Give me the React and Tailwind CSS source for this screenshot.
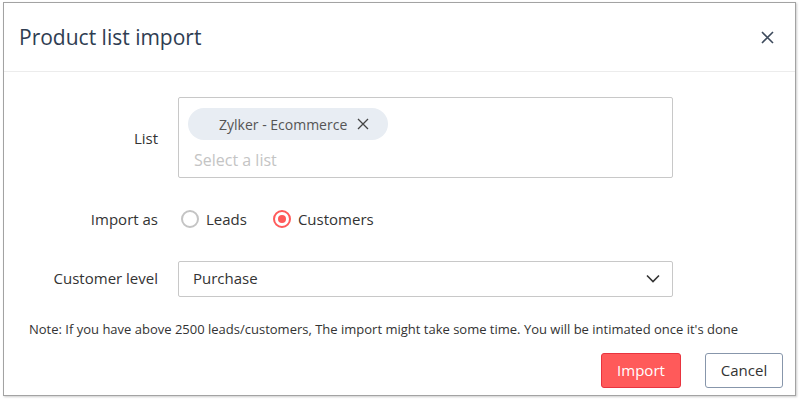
import React, { useState } from 'react'

const font = { fontFamily: '"Open Sans", "Noto Sans", sans-serif' }

const App = () => {
  const [importAs, setImportAs] = useState('customers')

  return (
    <div className="w-[800px] h-[400px] bg-white pt-[2px] pl-[3px]" style={font}>
      <div className="w-[793px] h-[394px] border border-[#a3a3a3] shadow-[1px_1px_2px_rgba(0,0,0,0.2)] bg-white flex flex-col">
        {/* header */}
        <div className="h-[69px] flex items-center justify-between pl-[15px] pr-[21px] border-b border-[#ececec]">
          <h2 className="text-[21px] text-[#2f3d52] leading-none">Product list import</h2>
          <button className="text-[#3d4a5c]">
            <svg width="13" height="13" viewBox="0 0 13 13" fill="none" stroke="currentColor" strokeWidth="1.6">
              <path d="M1 1L12 12M12 1L1 12" />
            </svg>
          </button>
        </div>

        {/* body */}
        <div className="flex flex-col pt-[25px]">
          <div className="flex items-start">
            <label className="w-[154px] pt-[30px] text-right text-[15px] text-[#333]">List</label>
            <div className="ml-[20px] w-[495px] h-[81px] border border-[#c8c8c8] rounded-[2px] px-[9px] pt-[10px]">
              <span className="inline-flex items-center h-[32px] rounded-full bg-[#e8edf3] pl-[31px] pr-[19px] text-[14px] text-[#555]">
                Zylker - Ecommerce
                <svg className="ml-[10px]" width="12" height="12" viewBox="0 0 12 12" fill="none" stroke="#444" strokeWidth="1.3">
                  <path d="M1 1L11 11M11 1L1 11" />
                </svg>
              </span>
              <div className="mt-[12px] pl-[6px] text-[16px] text-[#c4c4c4] leading-none">Select a list</div>
            </div>
          </div>

          <div className="flex items-center mt-[30px]">
            <label className="w-[154px] text-right text-[15px] text-[#333]">Import as</label>
            <div className="ml-[23px] flex items-center">
              <button onClick={() => setImportAs('leads')} className="flex items-center">
                <span className={`w-[18px] h-[18px] rounded-full border-2 flex items-center justify-center ${importAs === 'leads' ? 'border-[#ff5a5a]' : 'border-[#c4c4c4]'}`}>
                  {importAs === 'leads' && <span className="w-[8px] h-[8px] rounded-full bg-[#ff5a5a]" />}
                </span>
                <span className="ml-[7px] text-[15px] text-[#333]">Leads</span>
              </button>
              <button onClick={() => setImportAs('customers')} className="flex items-center ml-[26px]">
                <span className={`w-[18px] h-[18px] rounded-full border-2 flex items-center justify-center ${importAs === 'customers' ? 'border-[#ff5a5a]' : 'border-[#c4c4c4]'}`}>
                  {importAs === 'customers' && <span className="w-[8px] h-[8px] rounded-full bg-[#ff5a5a]" />}
                </span>
                <span className="ml-[7px] text-[15px] text-[#333]">Customers</span>
              </button>
            </div>
          </div>

          <div className="flex items-center mt-[30px]">
            <label className="w-[154px] text-right text-[15px] text-[#333]">Customer level</label>
            <div className="ml-[20px] w-[495px] h-[36px] border border-[#c8c8c8] rounded-[2px] flex items-center justify-between pl-[14px] pr-[12px]">
              <span className="text-[15px] text-[#333]">Purchase</span>
              <svg width="14" height="9" viewBox="0 0 14 9" fill="none" stroke="#333" strokeWidth="1.6">
                <path d="M1 1.5L7 7.5L13 1.5" />
              </svg>
            </div>
          </div>

          <p className="mt-[23px] pl-[25px] text-[13px] text-[#333]">
            Note: If you have above 2500 leads/customers, The import might take some time. You will be intimated once it's done
          </p>

          <div className="flex justify-end mt-[14px] pr-[12px] gap-[24px]">
            <button className="w-[80px] h-[35px] rounded-[3px] bg-[#ff5a5a] border border-[#e8343f] text-white text-[15px]">
              Import
            </button>
            <button className="w-[78px] h-[35px] rounded-[3px] bg-white border border-[#8796ab] text-[#333] text-[15px]">
              Cancel
            </button>
          </div>
        </div>
      </div>
    </div>
  )
}

export default App
